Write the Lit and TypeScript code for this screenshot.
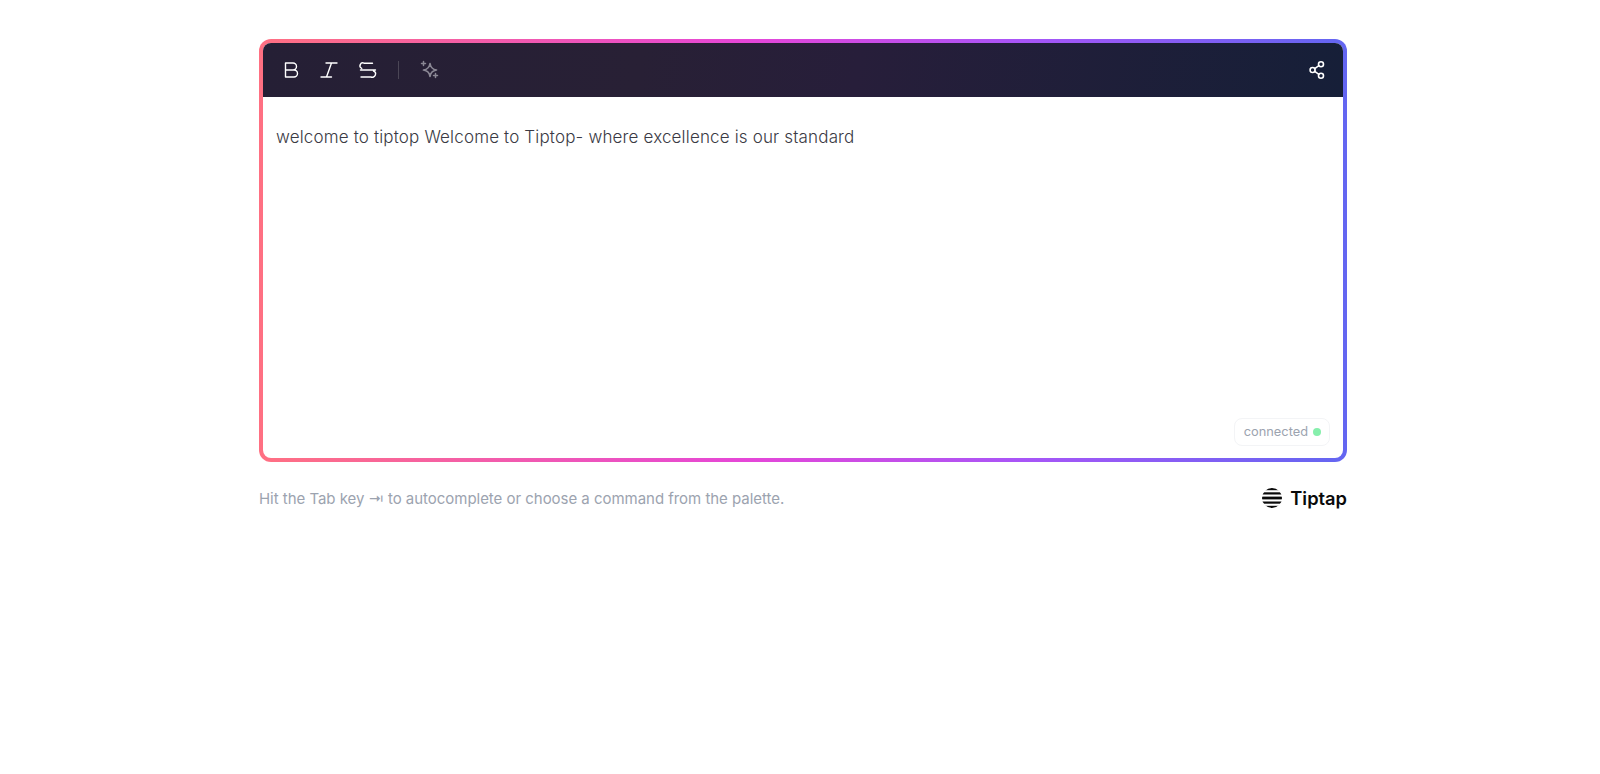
import { LitElement, html, css } from "lit";
import { customElement } from "lit/decorators.js";

@customElement("app-root")
export class AppRoot extends LitElement {
  static styles = css`
    :host { display: block; font-family: Inter, "Liberation Sans", sans-serif; background: #fff; min-height: 774px; }
    .wrap { width: 1088px; margin: 0 auto; padding-top: 39px; transform: translateX(3px); }
    .card { height: 423px; box-sizing: border-box; padding: 4px; border-radius: 12px; display: flex; flex-direction: column;
      background: linear-gradient(90deg, #ff7082 0%, #e546d8 45%, #a855f7 70%, #6366f1 100%); }
    .inner { flex: 1; background: #fff; border-radius: 8px; display: flex; flex-direction: column; overflow: hidden; }
    .bar { height: 54px; flex: none; display: flex; align-items: center; justify-content: space-between; padding: 0 16px 0 17.5px;
      background: linear-gradient(100deg, #251f35 0%, #282035 35%, #271e3a 55%, #161f38 100%); }
    .tools { display: flex; align-items: center; gap: 18.5px; }
    svg { display: block; fill: none; stroke-linecap: round; stroke-linejoin: round; }
    .ic { stroke: #fff; }
    .sep { width: 1px; height: 18px; background: #4b4656; margin-left: 1.5px; }
    .dim { stroke: #8a8794; margin-left: 3px; }
    .body { flex: 1; position: relative; padding: 28px 13px; font-size: 17px; font-weight: 350; letter-spacing: 0.16px; line-height: 24px; color: #3a3a44; }
    .status { position: absolute; right: 13px; bottom: 12px; height: 28px; box-sizing: border-box; padding: 0 8px 0 8.5px; border: 1px solid #f3f4f6;
      border-radius: 8px; display: flex; align-items: center; gap: 5px; font-size: 12.8px; font-weight: 400; letter-spacing: 0; color: #9ca3af; }
    .dot { width: 8px; height: 8px; border-radius: 50%; background: #86efac; }
    .foot { display: flex; justify-content: space-between; align-items: center; margin-top: 24px; font-size: 15px; letter-spacing: -0.03px; color: #9ca3af; height: 24px; }
    .logo { display: flex; align-items: center; gap: 8px; font-weight: 600; font-size: 18.3px; letter-spacing: 0; color: #0a0a0a; }
  `;
  render() {
    return html`<div class="wrap">
      <div class="card"><div class="inner">
        <div class="bar">
          <div class="tools">
            <svg class="ic" width="20" height="20" viewBox="0 0 20 20" stroke-width="1.4"><path d="M4.500 3h7.500a3.300 3.300 0 0 1 0 7H4.500zM4.500 10H13a3.500 3.500 0 0 1 0 7H4.500z"/></svg>
            <svg class="ic" width="20" height="20" viewBox="0 0 20 20" stroke-width="1.4"><path d="M7 3h11M2 17h10.500M12.500 3 7.500 17"/></svg>
            <svg class="ic" width="20" height="20" viewBox="0 0 20 20" stroke-width="1.4"><path d="M14.500 3.200H6a2.800 2.800 0 0 0-2.300 5.200M2.500 10h15M15.500 11a3 3 0 0 1-2.500 6H3"/></svg>
            <div class="sep"></div>
            <svg class="dim" width="20" height="20" viewBox="0 0 20 20" stroke-width="1.700"><path d="M10 3.500 Q10.800 9.200 16.500 10 Q10.800 10.800 10 16.500 Q9.200 10.800 3.500 10 Q9.200 9.200 10 3.500z"/><path stroke-width="1.500" d="M3.500 1.500v4M1.500 3.500h4M15.500 13.500v4M13.500 15.500h4"/></svg>
          </div>
          <svg class="ic" width="20" height="20" viewBox="0 0 20 20" stroke-width="1.6"><circle cx="14" cy="4.300" r="2.500"/><circle cx="5.600" cy="10" r="2.500"/><circle cx="14" cy="15.700" r="2.500"/><path d="M7.700 8.600 11.900 5.700M7.700 11.400l4.200 2.900"/></svg>
        </div>
        <div class="body">welcome to tiptop Welcome to Tiptop- where excellence is our standard
          <div class="status">connected<span class="dot"></span></div>
        </div>
      </div></div>
      <div class="foot">
        <span>Hit the Tab key ⇥ to autocomplete or choose a command from the palette.</span>
        <span class="logo"><svg width="20" height="20" viewBox="0 0 20 20"><defs><clipPath id="c"><circle cx="10" cy="10" r="10"/></clipPath></defs><g clip-path="url(#c)" fill="#0a0a0a"><rect y="0" width="20" height="2.200"/><rect y="4.300" width="20" height="2.200"/><rect y="8.600" width="20" height="2.800"/><rect y="13.500" width="20" height="2.200"/><rect y="17.800" width="20" height="2.200"/></g></svg>Tiptap</span>
      </div>
    </div>`;
  }
}
